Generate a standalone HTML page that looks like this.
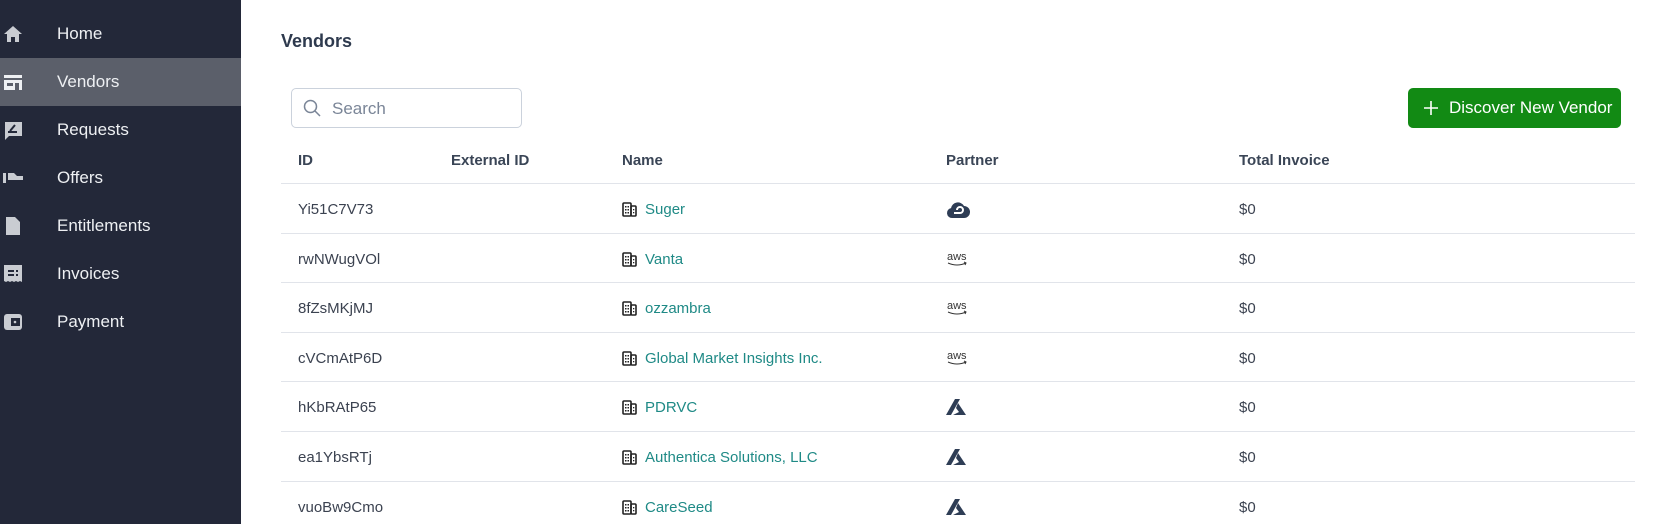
<!DOCTYPE html>
<html><head><meta charset="utf-8"><style>
*{margin:0;padding:0;box-sizing:border-box}
body{width:1667px;height:524px;overflow:hidden;background:#fff;font-family:"Liberation Sans",sans-serif;position:relative}
.sb{position:absolute;left:0;top:0;width:241px;height:524px;background:#232839}
.it{position:absolute;left:0;width:241px;height:48px;color:#eef0f3;font-size:17px;line-height:48px}
.it span{position:absolute;left:57px}
.it svg{position:absolute;left:3px;top:14px}
.act{background:#5b5f6a}
h1{position:absolute;left:281px;top:31px;font-size:18px;color:#2e3a4e;font-weight:bold}
.search{position:absolute;left:291px;top:88px;width:231px;height:40px;border:1px solid #cbd2dc;border-radius:5px}
.search span{position:absolute;left:40px;top:10px;font-size:17px;color:#7a8597}
.btn{position:absolute;left:1408px;top:88px;width:213px;height:40px;background:#128a14;border-radius:5px;color:#fff;font-size:17px;line-height:40px}
.btn span{position:absolute;left:41px}
.th{position:absolute;top:152px;font-size:15px;font-weight:bold;color:#3a4556}
.line{position:absolute;left:281px;width:1354px;height:1px;background:#e1e4ea}
.c{position:absolute;font-size:15px;color:#3b4250}
.n{color:#1f8a86}
</style></head><body>
<div class="sb">
<div class="it" style="top:10px"><svg width="20" height="20" viewBox="0 0 20 20"><path d="M10 2L1 10h3v8h4v-5h4v5h4v-8h3z" fill="#c9ccd2"/></svg><span>Home</span></div>
<div class="it act" style="top:58px"><svg width="20" height="20" viewBox="0 0 20 20"><rect x="1" y="3" width="18" height="3" fill="#eef0f3"/><rect x="1" y="8" width="18" height="10" fill="#eef0f3"/><rect x="4" y="11" width="6" height="3" fill="#5b5f6a"/><rect x="12" y="11" width="4" height="7" fill="#5b5f6a"/></svg><span>Vendors</span></div>
<div class="it" style="top:106px"><svg width="20" height="20" viewBox="0 0 20 20"><path d="M2 2h17v14H6l-4 4z" fill="#c9ccd2"/><path d="M5 12h9M7 11l5-6" stroke="#232839" stroke-width="2"/></svg><span>Requests</span></div>
<div class="it" style="top:154px"><svg width="20" height="20" viewBox="0 0 20 20"><rect x="0" y="5" width="3" height="10" fill="#c9ccd2"/><path d="M5 5h6l3 3h6v4H5z" fill="#c9ccd2"/></svg><span>Offers</span></div>
<div class="it" style="top:202px"><svg width="20" height="20" viewBox="0 0 20 20"><path d="M3 1h9l5 5v13H3z" fill="#c9ccd2"/></svg><span>Entitlements</span></div>
<div class="it" style="top:250px"><svg width="20" height="20" viewBox="0 0 20 20"><path d="M1 1h18v17l-2-1-2 1-2-1-2 1-2-1-2 1-2-1-2 1-2-1z" fill="#c9ccd2"/><rect x="5" y="6" width="6" height="2" fill="#232839"/><rect x="5" y="10" width="6" height="2" fill="#232839"/><rect x="13" y="6" width="2" height="2" fill="#232839"/><rect x="13" y="10" width="2" height="2" fill="#232839"/></svg><span>Invoices</span></div>
<div class="it" style="top:298px"><svg width="20" height="20" viewBox="0 0 20 20"><rect x="1" y="2" width="18" height="16" rx="3" fill="#c9ccd2"/><rect x="8" y="6" width="9" height="8" fill="#232839"/><circle cx="12" cy="10" r="1.3" fill="#c9ccd2"/></svg><span>Payment</span></div>
</div>
<h1>Vendors</h1>
<div class="search"><svg style="position:absolute;left:11px;top:10px" width="18" height="18" viewBox="0 0 18 18"><circle cx="7.5" cy="7.5" r="6" fill="none" stroke="#7a8597" stroke-width="1.5"/><path d="M12 12l5 5" stroke="#7a8597" stroke-width="1.5"/></svg><span>Search</span></div>
<div class="btn"><svg style="position:absolute;left:16px;top:13px" width="14" height="14"><path d="M7 0v14M0 7h14" stroke="#fff" stroke-width="1.6"/></svg><span>Discover New Vendor</span></div>
<div class="th" style="left:298px">ID</div>
<div class="th" style="left:451px">External ID</div>
<div class="th" style="left:622px">Name</div>
<div class="th" style="left:946px">Partner</div>
<div class="th" style="left:1239px">Total Invoice</div>
<div id="rows"></div>
<script>
var d=[["Yi51C7V73","Suger","g"],["rwNWugVOl","Vanta","a"],["8fZsMKjMJ","ozzambra","a"],["cVCmAtP6D","Global Market Insights Inc.","a"],["hKbRAtP65","PDRVC","z"],["ea1YbsRTj","Authentica Solutions, LLC","z"],["vuoBw9Cmo","CareSeed","z"]];
var h="";
var bld='<svg width="15" height="15" viewBox="0 0 15 15"><rect x="1" y="1" width="8" height="13" rx="1" fill="none" stroke="#222" stroke-width="1.6"/><rect x="9" y="4" width="5" height="10" rx="1" fill="none" stroke="#222" stroke-width="1.6"/><rect x="3" y="4" width="1.5" height="1.5" fill="#222"/><rect x="5.5" y="4" width="1.5" height="1.5" fill="#222"/><rect x="3" y="7" width="1.5" height="1.5" fill="#222"/><rect x="5.5" y="7" width="1.5" height="1.5" fill="#222"/><rect x="3" y="10" width="1.5" height="1.5" fill="#222"/><rect x="5.5" y="10" width="1.5" height="1.5" fill="#222"/><rect x="11" y="7" width="1.3" height="1.3" fill="#222"/><rect x="11" y="10" width="1.3" height="1.3" fill="#222"/></svg>';
var ic={g:'<svg width="24" height="20" viewBox="0 0 24 20"><path d="M6 18a5 5 0 0 1-1-9.9A7 7 0 0 1 18 6a6 6 0 0 1 0 12z" fill="#2e3d55"/><path d="M8 13h6a3 3 0 1 0-3-3" fill="none" stroke="#fff" stroke-width="2"/></svg>',
a:'<svg width="24" height="18" viewBox="0 0 24 18"><text x="1" y="10" font-size="11" font-family="Liberation Sans" fill="#333">aws</text><path d="M2 13q9 4 18 0M18 12l2 1-1 2" fill="none" stroke="#333" stroke-width="1"/></svg>',
z:'<svg width="22" height="18" viewBox="0 0 22 18"><path d="M9 1h5L5 17H0z" fill="#2e3d55"/><path d="M12 5l8 12H7l6-3-3-4z" fill="#2e3d55"/></svg>'};
for(var i=0;i<7;i++){var t=183+i*49.6,c=t+27;
h+='<div class="line" style="top:'+t+'px"></div>';
h+='<div class="c" style="left:298px;top:'+(c-9)+'px">'+d[i][0]+'</div>';
h+='<div class="c" style="left:622px;top:'+(c-8)+'px">'+bld+'</div>';
h+='<div class="c n" style="left:645px;top:'+(c-9)+'px">'+d[i][1]+'</div>';
h+='<div class="c" style="left:946px;top:'+(c-10)+'px">'+ic[d[i][2]]+'</div>';
h+='<div class="c" style="left:1239px;top:'+(c-9)+'px">$0</div>';}
document.getElementById("rows").innerHTML=h;
</script>
</body></html>
